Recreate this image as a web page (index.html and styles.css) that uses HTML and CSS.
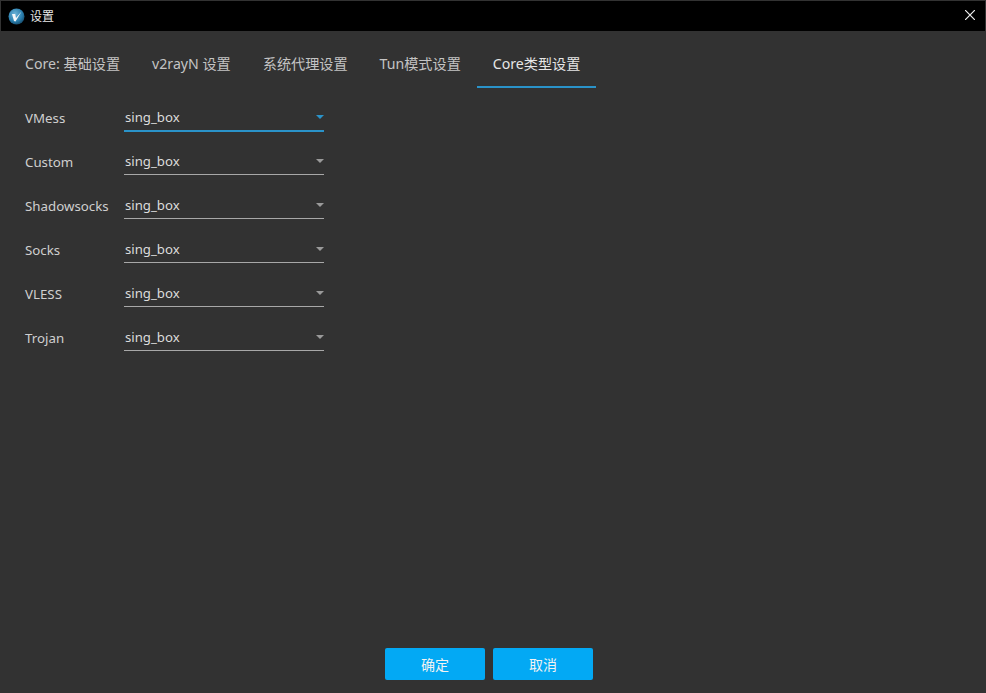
FILE: index.html
```html
<!DOCTYPE html>
<html lang="zh-CN">
<head>
    <meta charset="UTF-8">
    <title>设置</title>
    <link rel="stylesheet" href="styles.css">
</head>
<body>
    <div class="window">
        <div class="titlebar">
            <svg class="app-icon" width="17" height="17" viewBox="0 0 17 17">
                <defs>
                    <radialGradient id="ball" cx="0.4" cy="0.35" r="0.75">
                        <stop offset="0" stop-color="#6db4d8"/>
                        <stop offset="0.6" stop-color="#2a7fae"/>
                        <stop offset="1" stop-color="#123f5c"/>
                    </radialGradient>
                </defs>
                <circle cx="8.5" cy="8.5" r="8" fill="url(#ball)"/>
                <path d="M4 6 L7.2 6 L8 10 L13.5 3.5 L7.5 13.5 L6 13 Z" fill="#f4f7f9"/>
            </svg>
            <span class="title">设置</span>
            <svg class="close" width="10" height="10" viewBox="0 0 10 10">
                <path d="M0 0 L10 10 M10 0 L0 10" stroke="#f0f0f0" stroke-width="1.2"/>
            </svg>
        </div>

        <div class="tabs">
            <div class="tab">Core: 基础设置</div>
            <div class="tab">v2rayN 设置</div>
            <div class="tab">系统代理设置</div>
            <div class="tab">Tun模式设置</div>
            <div class="tab active">Core类型设置</div>
        </div>

        <div class="form">
            <div class="row">
                <label class="row-label">VMess</label>
                <div class="combo focused"><span>sing_box</span><i class="arrow"></i></div>
            </div>
            <div class="row">
                <label class="row-label">Custom</label>
                <div class="combo"><span>sing_box</span><i class="arrow"></i></div>
            </div>
            <div class="row">
                <label class="row-label">Shadowsocks</label>
                <div class="combo"><span>sing_box</span><i class="arrow"></i></div>
            </div>
            <div class="row">
                <label class="row-label">Socks</label>
                <div class="combo"><span>sing_box</span><i class="arrow"></i></div>
            </div>
            <div class="row">
                <label class="row-label">VLESS</label>
                <div class="combo"><span>sing_box</span><i class="arrow"></i></div>
            </div>
            <div class="row">
                <label class="row-label">Trojan</label>
                <div class="combo"><span>sing_box</span><i class="arrow"></i></div>
            </div>
        </div>

        <div class="footer">
            <button class="btn">确定</button>
            <button class="btn">取消</button>
        </div>
    </div>
</body>
</html>
```

FILE: styles.css
```css
* {
    margin: 0;
    padding: 0;
    box-sizing: border-box;
}
body {
    background: #323232;
    font-family: "Noto Sans", "Noto Sans CJK SC", sans-serif;
    font-size: 14.15px;
    color: #d8d8d8;
}
.window {
    height: 693px;
    display: flex;
    flex-direction: column;
    padding-top: 1px;
    overflow: hidden;
}
.titlebar {
    height: 30px;
    margin: 0 1px;
    background: #000000;
    display: flex;
    align-items: center;
    padding-left: 7px;
    flex-shrink: 0;
}
.title {
    margin-left: 5px;
    font-size: 12px;
    color: #e8e8e8;
}
.close {
    margin-left: auto;
    margin-right: 10px;
    margin-bottom: 2px;
}
.tabs {
    display: flex;
    margin-top: 9px;
    padding-left: 9px;
}
.tab {
    height: 48px;
    line-height: 48px;
    padding: 0 16px;
    color: #c4c4c4;
    white-space: nowrap;
}
.tab.active {
    color: #e6e6e6;
    border-bottom: 2px solid #2a93c9;
}
.form {
    flex: 1;
    padding: 7px 0 0 25px;
}
.row {
    height: 44px;
    display: flex;
    align-items: center;
}
.row-label {
    width: 99px;
    padding-top: 2px;
    color: #cfcfcf;
    font-size: 13.3px;
}
.combo {
    width: 200px;
    height: 28px;
    padding-left: 1px;
    display: flex;
    align-items: center;
    justify-content: space-between;
    border-bottom: 1px solid #a8a8a8;
    color: #dcdcdc;
    font-size: 13.2px;
}
.combo.focused {
    border-bottom-color: #2a93c9;
    box-shadow: 0 1px 0 #2a93c9;
}
.arrow {
    width: 0;
    height: 0;
    border-left: 4px solid transparent;
    border-right: 4px solid transparent;
    border-top: 4px solid #9a9a9a;
}
.combo.focused .arrow {
    border-top-color: #2a93c9;
}
.footer {
    display: flex;
    justify-content: center;
    gap: 8px;
    padding: 0 8px 13px 0;
}
.btn {
    width: 100px;
    height: 32px;
    border: none;
    border-radius: 2px;
    background: #03a9f4;
    color: #f2f2f2;
    font-family: inherit;
    font-size: 14px;
}
```
